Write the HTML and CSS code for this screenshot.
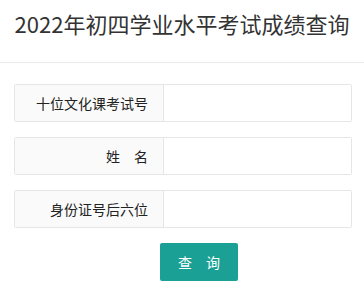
FILE: index.html
```html
<!DOCTYPE html>
<html lang="zh-CN">
<head>
<meta charset="utf-8">
<title>2022年初四学业水平考试成绩查询</title>
<link rel="stylesheet" href="styles.css">
</head>
<body>
<div class="header">
  <h1 class="title">2022年初四学业水平考试成绩查询</h1>
</div>
<form class="form">
  <div class="row">
    <label class="label">十位文化课考试号</label>
    <input class="input" type="text">
  </div>
  <div class="row">
    <label class="label">姓&emsp;名</label>
    <input class="input" type="text">
  </div>
  <div class="row">
    <label class="label">身份证号后六位</label>
    <input class="input" type="text">
  </div>
  <div class="actions">
    <button class="btn" type="button">查&emsp;询</button>
  </div>
</form>
</body>
</html>
```
FILE: styles.css
```css
* { box-sizing: border-box; }
html, body {
  margin: 0;
  padding: 0;
  background: #fff;
  font-family: "Noto Sans CJK SC", "Noto Sans", sans-serif;
  color: #222;
}
.header {
  height: 63px;
  border-bottom: 1px solid #ebebeb;
  padding-top: 9px;
}
.title {
  margin: 0;
  font-size: 22px;
  line-height: 28px;
  font-weight: 400;
  text-align: center;
  color: #333;
}
.form {
  padding: 21px 12px 0 14px;
}
.row {
  display: flex;
  height: 38px;
  border: 1px solid #e6e6e6;
  border-radius: 2px;
  margin-bottom: 15px;
  background: #fff;
}
.label {
  width: 149px;
  flex: none;
  background: #fafafa;
  border-right: 1px solid #e6e6e6;
  padding: 0 15px;
  text-align: right;
  font-size: 14px;
  line-height: 36px;
  color: #222;
}
.input {
  flex: 1;
  min-width: 0;
  border: 0;
  outline: none;
  background: #fff;
  padding: 0 10px;
  font-size: 14px;
}
.actions {
  display: flex;
  padding-left: 146px;
}
.btn {
  height: 38px;
  padding: 0 18px;
  border: 0;
  border-radius: 2px;
  background: #1aa094;
  color: #fff;
  font-family: "Noto Sans CJK SC", sans-serif;
  font-size: 14px;
  line-height: 38px;
  cursor: pointer;
}
```
